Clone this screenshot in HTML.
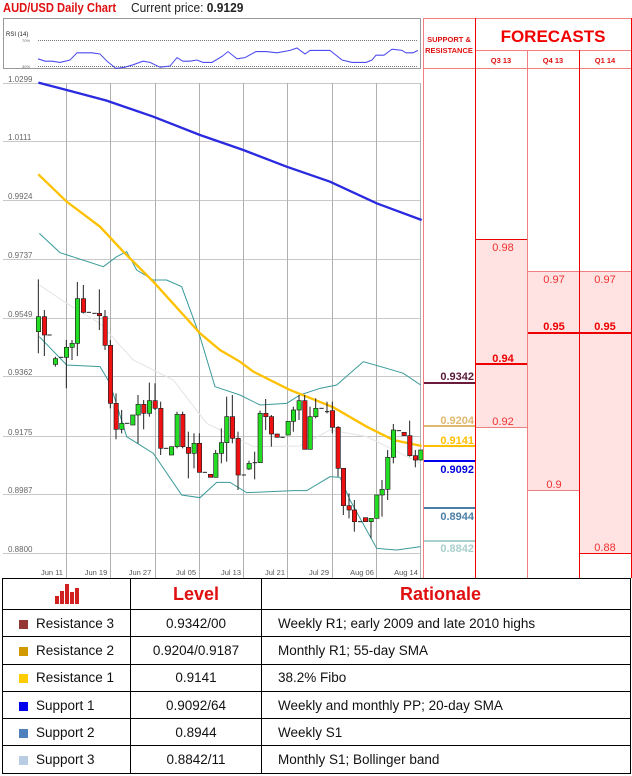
<!DOCTYPE html>
<html><head><meta charset="utf-8"><style>
*{margin:0;padding:0;box-sizing:border-box}
body{width:632px;height:776px;background:#fff;font-family:"Liberation Sans",sans-serif;position:relative;overflow:hidden}
.abs{position:absolute}
table{border-collapse:collapse;position:absolute;left:2px;top:578px;width:629px}
td{border:1px solid #000;font-size:13.5px;color:#111;height:27.3px}
.sw{display:inline-block;width:9px;height:9px;margin:0 8px 0 16px;vertical-align:-1px}
</style></head><body>
<div class="abs" style="left:3px;top:0;font-size:13px;font-weight:bold;color:#e01010;transform:scaleX(0.86);transform-origin:0 0;white-space:nowrap">AUD/USD Daily Chart</div>
<div class="abs" style="left:131px;top:0;font-size:13px;color:#222;transform:scaleX(0.92);transform-origin:0 0;white-space:nowrap">Current price: <b>0.9129</b></div>

<svg class="abs" style="left:0;top:0" width="632" height="580">
<rect x="3.5" y="18.5" width="417" height="50" fill="#fff" stroke="#999"/>
<text x="6" y="36" font-size="6" fill="#222">RSI (14)</text>
<text x="22" y="42" font-size="4" fill="#666">70%</text>
<text x="22" y="68" font-size="4" fill="#666">30%</text>
<line x1="38" y1="40.5" x2="418" y2="40.5" stroke="#777" stroke-dasharray="1,1"/>
<line x1="38" y1="66.5" x2="418" y2="66.5" stroke="#777" stroke-dasharray="1,1"/>
<g transform="translate(0,-1.2) scale(1,1.2)">
<polyline fill="none" stroke="#4a4af0" stroke-width="0.9" points="38,50 45,52 52,52 60,53 70,51 77,45 92,45 100,46 107,52 116,58 125,57 133,55 143,52 150,53 160,57 170,56 177,49 183,52 190,52 197,51 203,53 212,53 222,48 228,44 237,50 245,49 256,44 266,44 277,45 290,43 297,41 305,46 310,43 330,43 342,51 352,53 366,53 372,51 376,47 384,47 392,42 402,43 406,45 413,45 418,43"/>
</g>
<g stroke="#c8c8c8" stroke-width="1">
<line x1="3" y1="83.5" x2="420" y2="83.5"/><line x1="3" y1="141.5" x2="420" y2="141.5"/><line x1="3" y1="200.5" x2="420" y2="200.5"/><line x1="3" y1="259.5" x2="420" y2="259.5"/><line x1="3" y1="318.5" x2="420" y2="318.5"/><line x1="3" y1="376.5" x2="420" y2="376.5"/><line x1="3" y1="436.5" x2="420" y2="436.5"/><line x1="3" y1="494.5" x2="420" y2="494.5"/><line x1="3" y1="553.5" x2="420" y2="553.5"/>
</g>
<g stroke="#b0b0b0" stroke-width="1">
<line x1="66.5" y1="83" x2="66.5" y2="578"/><line x1="110.5" y1="83" x2="110.5" y2="578"/><line x1="155.5" y1="83" x2="155.5" y2="578"/><line x1="199.5" y1="83" x2="199.5" y2="578"/><line x1="243.5" y1="83" x2="243.5" y2="578"/><line x1="287.5" y1="83" x2="287.5" y2="578"/><line x1="332.5" y1="83" x2="332.5" y2="578"/><line x1="376.5" y1="83" x2="376.5" y2="578"/><line x1="420.5" y1="83" x2="420.5" y2="578"/>
</g>
<g font-size="8" fill="#666">
<text x="8" y="82">1.0299</text><text x="8" y="140">1.0111</text><text x="8" y="199">0.9924</text><text x="8" y="258">0.9737</text><text x="8" y="317">0.9549</text><text x="8" y="375">0.9362</text><text x="8" y="435">0.9175</text><text x="8" y="493">0.8987</text><text x="8" y="552">0.8800</text>
</g>
<g font-size="7.5" fill="#555" text-anchor="middle">
<text x="52" y="575">Jun 11</text><text x="96" y="575">Jun 19</text><text x="140" y="575">Jun 27</text><text x="186" y="575">Jul 05</text><text x="231" y="575">Jul 13</text><text x="275" y="575">Jul 21</text><text x="319" y="575">Jul 29</text><text x="362" y="575">Aug 06</text><text x="406" y="575">Aug 14</text>
</g>
<g transform="translate(0,70) scale(0.33333)" fill="none">
<polyline stroke="#e4e4e4" stroke-width="3" points="118,645 200,700 300,760 400,870 520,930 620,1060 760,1130 900,1128 990,1080 1100,1100 1262,1180"/>
<polyline stroke="#3a9a9a" stroke-width="3" points="118,490 180,548 310,590 350,560 380,545 410,600 460,630 500,630 545,650 600,800 645,950 720,975 780,1005 860,1000 900,975 960,955 1010,945 1090,875 1160,895 1210,910 1262,945"/>
<polyline stroke="#3a9a9a" stroke-width="3" points="118,800 200,885 300,890 330,940 380,1100 460,1150 545,1275 600,1283 650,1237 690,1237 740,1268 880,1262 920,1262 990,1220 1020,1222 1050,1290 1130,1435 1190,1440 1262,1430"/>
<polyline stroke="#2a2ae0" stroke-width="7" points="115,38 200,60 320,92 460,140 600,195 730,240 860,290 990,335 1130,400 1265,450"/>
<polyline stroke="#ffc000" stroke-width="7" points="115,313 200,395 300,470 370,545 460,635 600,790 660,840 720,875 760,905 870,960 1000,1012 1100,1070 1180,1110 1265,1128"/>
<g stroke="#222" stroke-width="3">
<line x1="115" y1="628" x2="115" y2="850"/><line x1="133" y1="720" x2="133" y2="858"/><line x1="166" y1="860" x2="166" y2="890"/><line x1="199" y1="810" x2="199" y2="955"/><line x1="216" y1="810" x2="216" y2="870"/><line x1="232" y1="636" x2="232" y2="858"/><line x1="250" y1="645" x2="250" y2="730"/><line x1="298" y1="658" x2="298" y2="780"/><line x1="315" y1="720" x2="315" y2="840"/><line x1="331" y1="810" x2="331" y2="1015"/><line x1="348" y1="970" x2="348" y2="1108"/><line x1="365" y1="1020" x2="365" y2="1090"/><line x1="414" y1="975" x2="414" y2="1120"/><line x1="431" y1="990" x2="431" y2="1078"/><line x1="448" y1="938" x2="448" y2="1040"/><line x1="465" y1="940" x2="465" y2="1020"/><line x1="482" y1="995" x2="482" y2="1155"/><line x1="531" y1="1025" x2="531" y2="1135"/><line x1="548" y1="1025" x2="548" y2="1135"/><line x1="565" y1="1085" x2="565" y2="1225"/><line x1="582" y1="1090" x2="582" y2="1195"/><line x1="598" y1="1090" x2="598" y2="1207"/><line x1="647" y1="1140" x2="647" y2="1222"/><line x1="664" y1="1075" x2="664" y2="1180"/><line x1="680" y1="980" x2="680" y2="1175"/><line x1="697" y1="975" x2="697" y2="1120"/><line x1="714" y1="1085" x2="714" y2="1260"/><line x1="747" y1="1172" x2="747" y2="1200"/><line x1="764" y1="1145" x2="764" y2="1228"/><line x1="780" y1="1022" x2="780" y2="1178"/><line x1="797" y1="987" x2="797" y2="1080"/><line x1="814" y1="1035" x2="814" y2="1130"/><line x1="880" y1="1010" x2="880" y2="1085"/><line x1="897" y1="975" x2="897" y2="1050"/><line x1="914" y1="975" x2="914" y2="1138"/><line x1="930" y1="1010" x2="930" y2="1138"/><line x1="947" y1="985" x2="947" y2="1045"/><line x1="981" y1="995" x2="981" y2="1030"/><line x1="997" y1="995" x2="997" y2="1090"/><line x1="1014" y1="1068" x2="1014" y2="1220"/><line x1="1030" y1="1195" x2="1030" y2="1335"/><line x1="1047" y1="1270" x2="1047" y2="1345"/><line x1="1063" y1="1290" x2="1063" y2="1385"/><line x1="1113" y1="1345" x2="1113" y2="1405"/><line x1="1146" y1="1230" x2="1146" y2="1340"/><line x1="1163" y1="1140" x2="1163" y2="1290"/><line x1="1180" y1="1062" x2="1180" y2="1180"/><line x1="1229" y1="1052" x2="1229" y2="1160"/><line x1="1246" y1="1140" x2="1246" y2="1192"/>
<line x1="142" y1="795" x2="155" y2="795"/><line x1="177" y1="862" x2="190" y2="862"/><line x1="260" y1="727" x2="273" y2="727"/><line x1="277" y1="730" x2="290" y2="730"/><line x1="375" y1="1060" x2="388" y2="1060"/><line x1="492" y1="1135" x2="505" y2="1135"/><line x1="608" y1="1207" x2="621" y2="1207"/><line x1="725" y1="1215" x2="738" y2="1215"/><line x1="758" y1="1178" x2="771" y2="1178"/><line x1="841" y1="1102" x2="854" y2="1102"/><line x1="958" y1="1015" x2="971" y2="1015"/><line x1="975" y1="1025" x2="988" y2="1025"/><line x1="1074" y1="1355" x2="1087" y2="1355"/><line x1="1190" y1="1082" x2="1203" y2="1082"/>
</g>
<g stroke="#222" stroke-width="2">
<g fill="#22dd22">
<rect x="109" y="740" width="13" height="45"/><rect x="160" y="866" width="13" height="17"/><rect x="193" y="832" width="13" height="30"/><rect x="210" y="820" width="13" height="12"/><rect x="226" y="686" width="13" height="134"/><rect x="359" y="1060" width="13" height="18"/><rect x="392" y="1035" width="13" height="30"/><rect x="408" y="1003" width="13" height="32"/><rect x="442" y="992" width="13" height="38"/><rect x="508" y="1130" width="13" height="25"/><rect x="525" y="1033" width="13" height="97"/><rect x="576" y="1120" width="13" height="30"/><rect x="641" y="1150" width="13" height="72"/><rect x="658" y="1118" width="13" height="32"/><rect x="674" y="1040" width="13" height="78"/><rect x="741" y="1180" width="13" height="17"/><rect x="774" y="1030" width="13" height="148"/><rect x="858" y="1054" width="13" height="41"/><rect x="874" y="1020" width="13" height="34"/><rect x="891" y="992" width="13" height="28"/><rect x="924" y="1040" width="13" height="98"/><rect x="941" y="1015" width="13" height="25"/><rect x="1107" y="1345" width="13" height="10"/><rect x="1124" y="1275" width="13" height="70"/><rect x="1140" y="1258" width="13" height="17"/><rect x="1157" y="1162" width="13" height="96"/><rect x="1174" y="1080" width="13" height="82"/><rect x="1256" y="1140" width="13" height="30"/>
</g>
<g fill="#ee1111">
<rect x="127" y="740" width="13" height="55"/><rect x="244" y="686" width="13" height="41"/><rect x="292" y="730" width="13" height="7"/><rect x="309" y="740" width="13" height="86"/><rect x="325" y="826" width="13" height="174"/><rect x="342" y="1000" width="13" height="78"/><rect x="425" y="1003" width="13" height="27"/><rect x="459" y="992" width="13" height="23"/><rect x="476" y="1015" width="13" height="120"/><rect x="542" y="1033" width="13" height="97"/><rect x="559" y="1132" width="13" height="18"/><rect x="592" y="1120" width="13" height="87"/><rect x="625" y="1213" width="13" height="9"/><rect x="691" y="1040" width="13" height="65"/><rect x="708" y="1105" width="13" height="110"/><rect x="791" y="1030" width="13" height="10"/><rect x="808" y="1040" width="13" height="52"/><rect x="825" y="1092" width="13" height="10"/><rect x="908" y="992" width="13" height="146"/><rect x="991" y="1022" width="13" height="50"/><rect x="1008" y="1072" width="13" height="123"/><rect x="1024" y="1195" width="13" height="112"/><rect x="1041" y="1307" width="13" height="13"/><rect x="1057" y="1320" width="13" height="35"/><rect x="1090" y="1343" width="13" height="12"/><rect x="1206" y="1087" width="13" height="10"/><rect x="1223" y="1097" width="13" height="60"/><rect x="1240" y="1157" width="13" height="13"/>
</g>
</g>
</g>

<rect x="476" y="239" width="51" height="188" fill="#ffe3e3"/>
<rect x="528" y="271" width="51" height="219" fill="#ffe3e3"/>
<rect x="580" y="271" width="51" height="282" fill="#ffe3e3"/>
<g stroke="#f08080" stroke-width="1">
<line x1="423.5" y1="18" x2="423.5" y2="578"/>
<line x1="527.5" y1="50" x2="527.5" y2="578"/>
<line x1="423" y1="18.5" x2="632" y2="18.5"/>
<line x1="476" y1="50.5" x2="632" y2="50.5"/>
<line x1="423" y1="68.5" x2="632" y2="68.5"/>
<line x1="528" y1="271.5" x2="631" y2="271.5"/>
<line x1="476" y1="427.5" x2="527" y2="427.5"/>
<line x1="528" y1="490.5" x2="579" y2="490.5"/>
</g>
<g stroke="#f00000" stroke-width="1">
<line x1="475.5" y1="18" x2="475.5" y2="578"/>
<line x1="579.5" y1="50" x2="579.5" y2="578"/>
<line x1="631.5" y1="18" x2="631.5" y2="578"/>
<line x1="476" y1="239.5" x2="527" y2="239.5"/>
<line x1="580" y1="553.5" x2="631" y2="553.5"/>
</g>
<line x1="476" y1="364" x2="527" y2="364" stroke="#e00" stroke-width="2"/>
<line x1="528" y1="333" x2="631" y2="333" stroke="#e00" stroke-width="2"/>
<text x="449" y="42" font-size="7.5" font-weight="bold" fill="#e01010" text-anchor="middle">SUPPORT &amp;</text>
<text x="449" y="53" font-size="7.5" font-weight="bold" fill="#e01010" text-anchor="middle">RESISTANCE</text>
<text x="553" y="42" font-size="17" font-weight="bold" fill="#f00000" text-anchor="middle">FORECASTS</text>
<g font-size="7.5" font-weight="bold" fill="#e01010" text-anchor="middle"><text x="501" y="63">Q3 13</text><text x="553" y="63">Q4 13</text><text x="605" y="63">Q1 14</text></g>
<g font-size="11" fill="#f03030" text-anchor="middle">
<text x="503" y="251">0.98</text><text x="554" y="283">0.97</text><text x="605" y="283">0.97</text><text x="503" y="425">0.92</text><text x="554" y="488">0.9</text><text x="605" y="551">0.88</text>
</g>
<g font-size="11" font-weight="bold" fill="#e00" text-anchor="middle"><text x="503" y="362">0.94</text><text x="554" y="330">0.95</text><text x="605" y="330">0.95</text></g>
<line x1="424" y1="383" x2="475" y2="383" stroke="#6a1a3a" stroke-width="2"/>
<line x1="424" y1="426" x2="475" y2="426" stroke="#e0b870" stroke-width="2"/>
<line x1="424" y1="446" x2="475" y2="446" stroke="#ffc000" stroke-width="2"/>
<line x1="424" y1="461" x2="475" y2="461" stroke="#0000ee" stroke-width="2"/>
<line x1="424" y1="508" x2="475" y2="508" stroke="#4a80a8" stroke-width="2"/>
<line x1="424" y1="541" x2="475" y2="541" stroke="#a8d0cc" stroke-width="2"/>
<g font-size="11" font-weight="bold" text-anchor="end">
<text x="474" y="380" fill="#5a1a3a">0.9342</text><text x="474" y="424" fill="#e0b870">0.9204</text><text x="474" y="444" fill="#ffc000">0.9141</text><text x="474" y="473" fill="#0000dd">0.9092</text><text x="474" y="520" fill="#4a80a8">0.8944</text><text x="474" y="552" fill="#a8d0cc">0.8842</text>
</g>
</svg>

<table>
<tr style="height:31px"><td style="width:128px;text-align:center"><svg width="26" height="22" viewBox="0 0 26 22"><g fill="#d02020"><rect x="1" y="14" width="4" height="8"/><rect x="6" y="9" width="4" height="13"/><rect x="11" y="2" width="4" height="20"/><rect x="16" y="10" width="4" height="12"/><rect x="21" y="6" width="4" height="16"/></g></svg></td><td style="width:131px;text-align:center;font-size:18px;font-weight:bold;color:#e01010">Level</td><td style="padding-left:138px;font-size:18px;font-weight:bold;color:#e01010">Rationale</td></tr>
<tr><td><span class="sw" style="background:#953735"></span>Resistance 3</td><td style="text-align:center">0.9342/00</td><td style="padding-left:16px">Weekly R1; early 2009 and late 2010 highs</td></tr>
<tr><td><span class="sw" style="background:#d09a00"></span>Resistance 2</td><td style="text-align:center">0.9204/0.9187</td><td style="padding-left:16px">Monthly R1; 55-day SMA</td></tr>
<tr><td><span class="sw" style="background:#ffcc00"></span>Resistance 1</td><td style="text-align:center">0.9141</td><td style="padding-left:16px">38.2% Fibo</td></tr>
<tr><td><span class="sw" style="background:#0000ee"></span>Support 1</td><td style="text-align:center">0.9092/64</td><td style="padding-left:16px">Weekly and monthly PP; 20-day SMA</td></tr>
<tr><td><span class="sw" style="background:#4f81bd"></span>Support 2</td><td style="text-align:center">0.8944</td><td style="padding-left:16px">Weekly S1</td></tr>
<tr><td><span class="sw" style="background:#b8cce4"></span>Support 3</td><td style="text-align:center">0.8842/11</td><td style="padding-left:16px">Monthly S1; Bollinger band</td></tr>
</table>
</body></html>
